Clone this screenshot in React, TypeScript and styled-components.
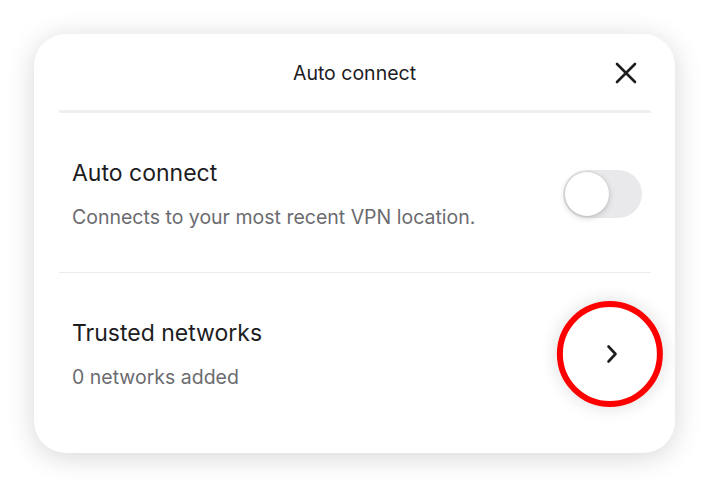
import React from "react";
import styled, { createGlobalStyle } from "styled-components";

const Global = createGlobalStyle`
  html, body { margin: 0; padding: 0; background: #ffffff; }
  body { font-family: Inter, "Noto Sans", "Liberation Sans", sans-serif; -webkit-font-smoothing: antialiased; }
`;

const Page = styled.div`
  padding: 34px;
  width: 710px;
  height: 488px;
  box-sizing: border-box;
`;

const Card = styled.div`
  width: 641px;
  height: 419px;
  background: #ffffff;
  border-radius: 32px;
  box-shadow: 0 4px 28px rgba(0, 0, 0, 0.16);
  display: flex;
  flex-direction: column;
  overflow: hidden;
`;

const Header = styled.div`
  height: 76px;
  display: grid;
  grid-template-columns: 1fr auto 1fr;
  align-items: center;
  padding: 2px 37px 0 37px;
  box-sizing: border-box;
`;

const HeaderTitle = styled.div`
  grid-column: 2;
  font-size: 19.5px;
  color: #1d1d1f;
`;

const CloseButton = styled.button`
  grid-column: 3;
  justify-self: end;
  width: 24px;
  height: 24px;
  padding: 0;
  border: none;
  background: none;
  display: flex;
  align-items: center;
  justify-content: center;
`;

const Divider = styled.div<{ $thick?: boolean }>`
  margin: 0 24px 0 25px;
  height: ${(p) => (p.$thick ? "3px" : "1px")};
  background: ${(p) => (p.$thick ? "#efefef" : "#ebebeb")};
`;

const Row = styled.div<{ $pt: number; $pb: number }>`
  display: flex;
  align-items: center;
  justify-content: space-between;
  padding: ${(p) => p.$pt}px 33px ${(p) => p.$pb}px 38px;
`;

const TextBlock = styled.div`
  display: flex;
  flex-direction: column;
  gap: 18px;
`;

const Title = styled.div`
  font-size: 23px;
  line-height: 28px;
  color: #1d1d1f;
`;

const Subtitle = styled.div`
  font-size: 19.5px;
  line-height: 24px;
  color: #6b6b70;
`;

const Track = styled.div`
  width: 79px;
  height: 48px;
  border-radius: 24px;
  background: #e9e9eb;
  display: flex;
  align-items: center;
  padding: 0 2px;
  box-sizing: border-box;
`;

const Knob = styled.div`
  width: 44px;
  height: 44px;
  border-radius: 50%;
  background: #ffffff;
  box-shadow: 0 2px 6px rgba(0, 0, 0, 0.18), 0 0 0 1px rgba(0, 0, 0, 0.04);
`;

const ChevronSlot = styled.div`
  position: relative;
  width: 60px;
  height: 60px;
  display: flex;
  align-items: center;
  justify-content: center;
`;

const Ring = styled.div`
  position: absolute;
  left: 50%;
  top: 50%;
  width: 106px;
  height: 106px;
  transform: translate(-52%, -50%);
  box-sizing: border-box;
  border-radius: 50%;
  border: 6px solid #ff0000;
  background: #ffffff;
  box-shadow: 0 0 18px rgba(0, 0, 0, 0.14);
`;

const ChevronIcon = styled.svg`
  position: relative;
  z-index: 1;
`;

export default function App() {
  return (
    <>
      <Global />
      <Page>
        <Card>
          <Header>
            <HeaderTitle>Auto connect</HeaderTitle>
            <CloseButton aria-label="Close">
              <svg width="22" height="22" viewBox="0 0 22 22">
                <path d="M2 2 L20 20 M20 2 L2 20" stroke="#1d1d1f" strokeWidth="2.6" strokeLinecap="round" />
              </svg>
            </CloseButton>
          </Header>
          <Divider $thick />
          <Row $pt={46} $pb={43}>
            <TextBlock>
              <Title>Auto connect</Title>
              <Subtitle>Connects to your most recent VPN location.</Subtitle>
            </TextBlock>
            <Track>
              <Knob />
            </Track>
          </Row>
          <Divider />
          <Row $pt={46} $pb={61}>
            <TextBlock>
              <Title>Trusted networks</Title>
              <Subtitle>0 networks added</Subtitle>
            </TextBlock>
            <ChevronSlot>
              <Ring />
              <ChevronIcon width="12" height="20" viewBox="0 0 12 20">
                <path d="M2.5 2.5 L9.5 10 L2.5 17.5" fill="none" stroke="#1d1d1f" strokeWidth="2.6" strokeLinecap="round" strokeLinejoin="round" />
              </ChevronIcon>
            </ChevronSlot>
          </Row>
        </Card>
      </Page>
    </>
  );
}
